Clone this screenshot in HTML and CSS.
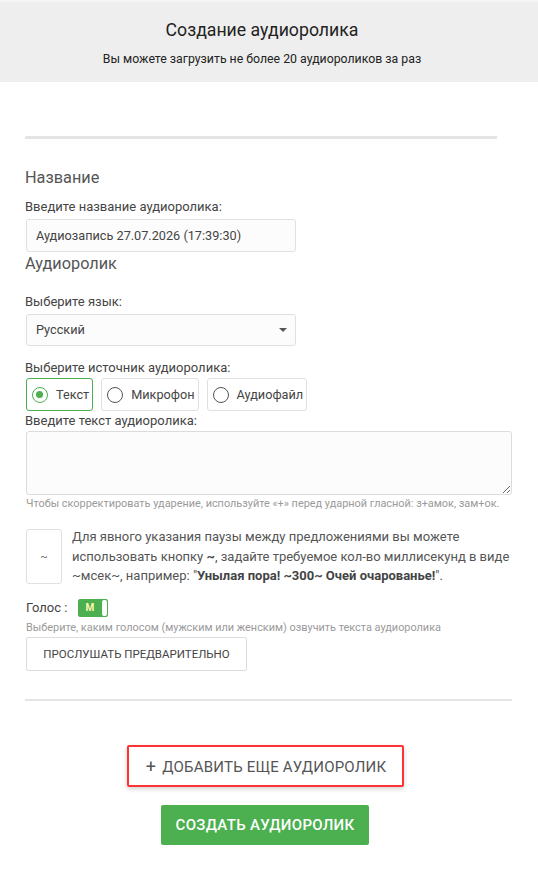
FILE: index.html
```html
<!DOCTYPE html>
<html lang="ru">
<head>
<meta charset="utf-8">
<link rel="stylesheet" href="styles.css">
</head>
<body>
<header class="top">
  <h1 class="title">Создание аудиоролика</h1>
  <p class="subtitle">Вы можете загрузить не более 20 аудиороликов за раз</p>
</header>
<main class="page">
  <hr class="rule rule-top">
  <h2 class="section">Название</h2>
  <label class="label">Введите название аудиоролика:</label>
  <div class="field">Аудиозапись 27.07.2026 (17:39:30)</div>
  <h2 class="section section-tight">Аудиоролик</h2>
  <label class="label label-lang">Выберите язык:</label>
  <div class="field select">Русский<span class="caret"></span></div>
  <label class="label label-src">Выберите источник аудиоролика:</label>
  <div class="radios">
    <div class="radio active"><span class="dot"></span>Текст</div>
    <div class="radio"><span class="dot"></span>Микрофон</div>
    <div class="radio"><span class="dot"></span>Аудиофайл</div>
  </div>
  <label class="label label-text">Введите текст аудиоролика:</label>
  <textarea class="area"></textarea>
  <p class="hint">Чтобы скорректировать ударение, используйте «+» перед ударной гласной: з+амок, зам+ок.</p>
  <div class="pause">
    <div class="tilde">~</div>
    <p class="pause-text">Для явного указания паузы между предложениями вы можете использовать кнопку <b>~</b>, задайте требуемое кол-во миллисекунд в виде ~мсек~, например: "<b>Унылая пора! ~300~ Очей очарованье!</b>".</p>
  </div>
  <div class="voice">
    <span>Голос :</span>
    <div class="toggle"><span class="tog-m">M</span><span class="knob"></span></div>
  </div>
  <p class="hint hint-voice">Выберите, каким голосом (мужским или женским) озвучить текста аудиоролика</p>
  <button class="btn-preview">ПРОСЛУШАТЬ ПРЕДВАРИТЕЛЬНО</button>
  <hr class="rule rule-bottom">
  <div class="actions">
    <button class="btn-add"><span class="plus">+</span>ДОБАВИТЬ ЕЩЕ АУДИОРОЛИК</button>
    <button class="btn-create">СОЗДАТЬ АУДИОРОЛИК</button>
  </div>
</main>
</body>
</html>
```
FILE: styles.css
```css
* { box-sizing: border-box; }
html, body { margin: 0; padding: 0; background: #fff; }
body {
  font-family: Roboto, "Noto Sans", "Liberation Sans", sans-serif;
  color: #555;
  font-size: 13px;
}
.top {
  background: #eeeeee;
  border-top: 2px solid #f4f4f4;
  height: 82px;
  text-align: center;
  padding: 16px 14px 0 0;
}
.title {
  margin: 0;
  font-size: 17.7px;
  font-weight: 400;
  color: #222;
  line-height: 24px;
}
.subtitle {
  margin: 8px 0 0;
  font-size: 12.3px;
  color: #222;
  line-height: 18px;
}
.page {
  padding: 0 26px 0 25px;
}
.rule {
  border: 0;
  margin: 0;
  background: #e5e5e5;
}
.rule-top {
  height: 3px;
  margin-top: 54px;
  margin-right: 15px;
}
.section {
  margin: 29px 0 0;
  font-size: 16.3px;
  font-weight: 400;
  line-height: 20px;
  color: #555;
}
.section-tight { margin-top: 2px; }
.label {
  display: block;
  margin-top: 10px;
  line-height: 18px;
  font-size: 13px;
  color: #444;
}
.label-lang { margin-top: 19px; }
.label-src { margin-top: 13px; }
.label-text { margin-top: 1px; }
.field {
  margin: 3px 0 0 1px;
  width: 270px;
  height: 33px;
  border: 1px solid #e0e0e0;
  border-radius: 3px;
  background: #fcfcfc;
  padding: 0 10px 0 9px;
  line-height: 31px;
  font-size: 12.7px;
  color: #444;
  position: relative;
}
.select { height: 32px; line-height: 30px; }
.caret {
  position: absolute;
  right: 8px;
  top: 13px;
  border-left: 4px solid transparent;
  border-right: 4px solid transparent;
  border-top: 4px solid #555;
}
.radios {
  display: flex;
  gap: 8px;
  margin: 1px 0 0 1px;
}
.radio {
  display: flex;
  align-items: center;
  gap: 8px;
  height: 33px;
  padding: 0 3px 0 5px;
  border: 1px solid #e0e0e0;
  border-radius: 3px;
  font-size: 12.7px;
  color: #444;
}
.dot {
  width: 16px;
  height: 16px;
  border: 1.5px solid #555;
  border-radius: 50%;
  display: inline-block;
  position: relative;
}
.radio.active { border-color: #4caf50; }
.radio.active .dot { border-color: #4caf50; }
.radio.active .dot::after {
  content: "";
  position: absolute;
  left: 3px; top: 3px;
  width: 7px; height: 7px;
  border-radius: 50%;
  background: #4caf50;
}
.area {
  display: block;
  margin: 1px 0 0 1px;
  width: 486px;
  height: 64px;
  border: 1px solid #dcdcdc;
  border-radius: 3px;
  background: #fcfcfc;
  resize: vertical;
}
.hint {
  margin: 1px 0 0 1px;
  font-size: 10.9px;
  line-height: 16px;
  color: #9a9a9a;
}
.pause {
  display: flex;
  gap: 10px;
  margin: 15px 0 0 1px;
}
.tilde {
  flex: 0 0 36px;
  height: 55px;
  margin-top: 2px;
  border: 1px solid #e0e0e0;
  border-radius: 3px;
  display: flex;
  align-items: center;
  justify-content: center;
  font-size: 11px;
  color: #666;
}
.pause-text {
  margin: 0;
  line-height: 19.5px;
  font-size: 13px;
  color: #555;
}
.pause-text b { color: #444; }
.voice {
  display: flex;
  align-items: center;
  gap: 11px;
  margin: 12px 0 0 1px;
  height: 20px;
  font-size: 13px;
  color: #444;
}
.toggle {
  width: 30px;
  height: 18px;
  background: #4caf50;
  border-radius: 2px;
  position: relative;
  display: flex;
  align-items: center;
  padding-left: 7px;
}
.tog-m {
  font-size: 10px;
  font-weight: 700;
  color: #fff6b0;
}
.knob {
  position: absolute;
  right: 1px;
  top: 1px;
  width: 5px;
  height: 16px;
  border-radius: 2px;
  background: #fff;
}
.hint-voice { margin-top: 2px; }
.btn-preview {
  display: block;
  margin: 1px 0 0 1px;
  width: 221px;
  height: 34px;
  background: #fff;
  border: 1px solid #dcdcdc;
  border-radius: 2px;
  font-family: inherit;
  font-size: 11.5px;
  color: #444;
  padding: 0;
}
.rule-bottom {
  height: 2px;
  margin-top: 28px;
}
.actions {
  display: flex;
  flex-direction: column;
  align-items: center;
  padding-top: 44px;
  padding-right: 7px;
}
.btn-add {
  width: 277px;
  height: 42px;
  background: #fff;
  border: 2px solid #f33;
  border-radius: 2px;
  box-shadow: 0 2px 5px rgba(0,0,0,0.18);
  font-family: inherit;
  font-size: 15px;
  color: #555;
  padding: 0 0 0 2px;
  letter-spacing: 0.2px;
}
.plus { font-size: 18px; margin-right: 6px; position: relative; top: 1px; }
.btn-create {
  margin-top: 18px;
  width: 208px;
  height: 40px;
  background: #4caf50;
  border: 0;
  border-radius: 2px;
  font-family: inherit;
  font-size: 15px;
  font-weight: 500;
  color: #fff;
  padding: 0;
  letter-spacing: 0.3px;
}
```
